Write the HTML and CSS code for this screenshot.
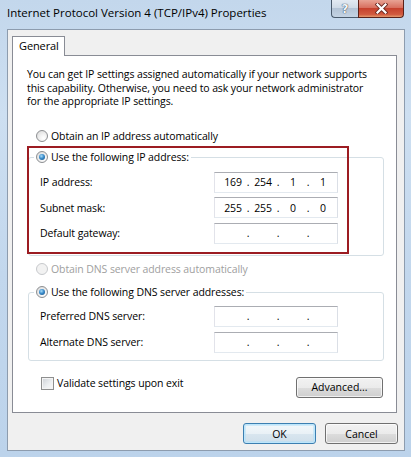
FILE: index.html
```html
<!DOCTYPE html>
<html lang="en">
<head>
    <meta charset="utf-8">
    <title>Internet Protocol Version 4 (TCP/IPv4) Properties</title>
    <link rel="stylesheet" href="styles.css">
</head>
<body>
    <div class="window">
        <div class="titlebar">
            <span class="title">Internet Protocol Version 4 (TCP/IPv4) Properties</span>
            <div class="caption">
                <button class="cap help">?</button>
                <button class="cap close">
                    <svg width="13" height="11" viewBox="0 0 13 11">
                        <path d="M2.5 1.5 L10.5 9.5 M10.5 1.5 L2.5 9.5" stroke="#6b2a22" stroke-width="4" stroke-linecap="square" fill="none"/>
                        <path d="M2.5 1.5 L10.5 9.5 M10.5 1.5 L2.5 9.5" stroke="#ffffff" stroke-width="2.2" stroke-linecap="square" fill="none"/>
                    </svg>
                </button>
            </div>
        </div>

        <div class="client">
            <div class="tabs">
                <div class="tab">General</div>
            </div>

            <div class="panel">
                <p class="intro">You can get IP settings assigned automatically if your network supports<br>this capability. Otherwise, you need to ask your network administrator<br>for the appropriate IP settings.</p>

                <label class="option"><span class="radio"></span>Obtain an IP address automatically</label>

                <fieldset class="group ip-group">
                    <legend><label class="option"><span class="radio on"></span>Use the following IP address:</label></legend>
                    <div class="rows">
                        <span class="field-label">IP address:</span>
                        <div class="ipbox"><span>169</span><i>.</i><span>254</span><i>.</i><span>1</span><i>.</i><span>1</span></div>
                        <span class="field-label">Subnet mask:</span>
                        <div class="ipbox"><span>255</span><i>.</i><span>255</span><i>.</i><span>0</span><i>.</i><span>0</span></div>
                        <span class="field-label">Default gateway:</span>
                        <div class="ipbox"><span></span><i>.</i><span></span><i>.</i><span></span><i>.</i><span></span></div>
                    </div>
                </fieldset>

                <!-- annotation drawn over the dialog -->
                <div class="highlight"></div>

                <label class="option disabled dns-auto"><span class="radio off"></span>Obtain DNS server address automatically</label>

                <fieldset class="group dns-group">
                    <legend><label class="option"><span class="radio on"></span>Use the following DNS server addresses:</label></legend>
                    <div class="rows">
                        <span class="field-label">Preferred DNS server:</span>
                        <div class="ipbox"><span></span><i>.</i><span></span><i>.</i><span></span><i>.</i><span></span></div>
                        <span class="field-label">Alternate DNS server:</span>
                        <div class="ipbox"><span></span><i>.</i><span></span><i>.</i><span></span><i>.</i><span></span></div>
                    </div>
                </fieldset>

                <div class="bottom-row">
                    <label class="check"><span class="checkbox"></span>Validate settings upon exit</label>
                    <button class="btn advanced">Advanced...</button>
                </div>
            </div>

            <div class="footer">
                <button class="btn default">OK</button>
                <button class="btn">Cancel</button>
            </div>
        </div>
    </div>
</body>
</html>
```

FILE: styles.css
```css
body {
    margin: 0;
    font-family: "Open Sans", "Noto Sans", sans-serif;
    font-size: 10.5px;
    letter-spacing: -0.1px;
    color: #000;
}
.window {
    width: 411px;
    height: 457px;
    box-sizing: border-box;
    padding: 0 6px 6px 7px;
    background: linear-gradient(to bottom, #c3d7ec 0, #cddff1 25%, #c2d7ed 60%, #bcd3eb 100%);
}
.titlebar {
    height: 29px;
    display: flex;
    justify-content: space-between;
    align-items: flex-start;
}
.title {
    padding-top: 5px;
    line-height: 16px;
    font-size: 11.5px;
    letter-spacing: 0;
}
.caption {
    display: flex;
    margin-right: 1px;
}
.cap {
    height: 18px;
    padding: 0;
    border: 1px solid #4a5a6c;
    border-top: none;
    display: flex;
    align-items: center;
    justify-content: center;
}
.help {
    width: 27px;
    border-radius: 0 0 0 4px;
    border-right: none;
    background: linear-gradient(to bottom, #e3eaf2 0, #d0dbe7 45%, #b4c4d6 50%, #c4d3e3 100%);
    color: #f5f7fa;
    font-family: "DejaVu Sans", sans-serif;
    font-size: 12px;
    font-weight: bold;
    text-shadow: 0 0 1px #2e3d50, 0 0 1px #2e3d50;
}
.close {
    width: 46px;
    border-radius: 0 0 4px 0;
    border-color: #5b2119;
    background: linear-gradient(to bottom, #e8a394 0, #d8705f 45%, #c6412d 50%, #d15a3f 85%, #e49a6e 100%);
}
.client {
    width: 398px;
    height: 422px;
    box-sizing: border-box;
    border: 1px solid #8d9cae;
    background: #f0f0f0;
    padding: 6px 0 0 4px;
}
.tabs {
    display: flex;
}
.tab {
    position: relative;
    z-index: 1;
    width: 53px;
    height: 20px;
    box-sizing: border-box;
    margin-bottom: -1px;
    border: 1px solid #898c95;
    border-bottom: none;
    background: #fff;
    padding-left: 6px;
    line-height: 18px;
    font-size: 11px;
}
.panel {
    position: relative;
    width: 385px;
    height: 358px;
    box-sizing: border-box;
    border: 1px solid #898c95;
    background: #fff;
    padding-top: 12px;
}
.intro {
    margin: 0 0 0 14px;
    line-height: 13.5px;
    white-space: nowrap;
}
.option {
    display: flex;
    align-items: center;
    height: 15px;
    line-height: 15px;
    white-space: nowrap;
}
.panel > .option {
    margin: 20px 0 0 23px;
}
.panel > .dns-auto {
    margin-top: 6px;
}
.option.disabled {
    color: #a0a0a0;
}
.radio {
    width: 12px;
    height: 12px;
    box-sizing: border-box;
    margin-right: 3px;
    border-radius: 50%;
    border: 1px solid #8c8e91;
    background: radial-gradient(circle at 65% 70%, #ffffff 0, #f3f3f3 35%, #d6d6d6 100%);
    display: flex;
    align-items: center;
    justify-content: center;
}
.radio.on::after {
    content: "";
    width: 6px;
    height: 6px;
    border-radius: 50%;
    background: radial-gradient(circle at 40% 35%, #a9dcf8 0, #3a8ccb 45%, #16497a 100%);
}
.radio.off {
    border-color: #c7c9cc;
    background: #f2f2f2;
}
.group {
    margin: 6px 12px 0 15px;
    padding: 0;
    border: 1px solid #d5dfe5;
    border-radius: 3px;
    box-shadow: inset 1px 1px 0 #fff;
}
.group legend {
    margin-left: 5px;
    padding: 0 2px;
}
.dns-group {
    margin-top: 8px;
}
.rows {
    display: grid;
    grid-template-columns: 174px 124px;
    row-gap: 4.5px;
    align-items: center;
    padding: 7px 0 11px 11px;
}
.dns-group .rows {
    padding: 6px 0 7px 11px;
    row-gap: 5px;
}
.field-label {
    white-space: nowrap;
}
.ipbox {
    height: 21px;
    box-sizing: border-box;
    border: 1px solid;
    border-color: #abadb3 #dbdfe6 #e3e9ef #e2e3ea;
    background: #fff;
    display: flex;
    align-items: center;
    padding-left: 7px;
}
.ipbox span {
    width: 22px;
    text-align: center;
}
.ipbox i {
    width: 8px;
    text-align: center;
    font-style: normal;
}
.highlight {
    position: absolute;
    left: 14px;
    top: 90px;
    width: 322px;
    height: 108px;
    box-sizing: border-box;
    border: 2px solid #9c1c22;
}
.bottom-row {
    display: flex;
    justify-content: space-between;
    align-items: flex-start;
    margin: 16px 13px 0 28px;
}
.check {
    display: flex;
    align-items: center;
    height: 13px;
    white-space: nowrap;
}
.checkbox {
    width: 13px;
    height: 13px;
    box-sizing: border-box;
    margin-right: 3px;
    border: 1px solid #8e8f8f;
    background: linear-gradient(135deg, #cdd1d6 0, #eef0f2 60%, #f8f8f8 100%);
    box-shadow: inset 0 0 0 1px #f4f4f4;
}
.btn {
    height: 21px;
    width: 73px;
    padding: 0;
    font: inherit;
    color: #000;
    border: 1px solid #707070;
    border-radius: 3px;
    background: linear-gradient(to bottom, #f2f2f2 0, #ebebeb 50%, #dddddd 50%, #cfcfcf 100%);
    box-shadow: inset 0 0 0 1px rgba(255, 255, 255, 0.7);
}
.btn.advanced {
    width: 87px;
}
.btn.default {
    border-color: #3c7fb1;
    background: linear-gradient(to bottom, #f3f8fb 0, #e9f1f6 50%, #d9e6ef 50%, #cfdfea 100%);
    box-shadow: inset 0 0 0 1px #bde6fb, inset 0 0 0 2px rgba(175, 222, 247, 0.5);
}
.footer {
    display: flex;
    justify-content: flex-end;
    gap: 9px;
    margin-top: 10px;
    padding-right: 6px;
}
```
